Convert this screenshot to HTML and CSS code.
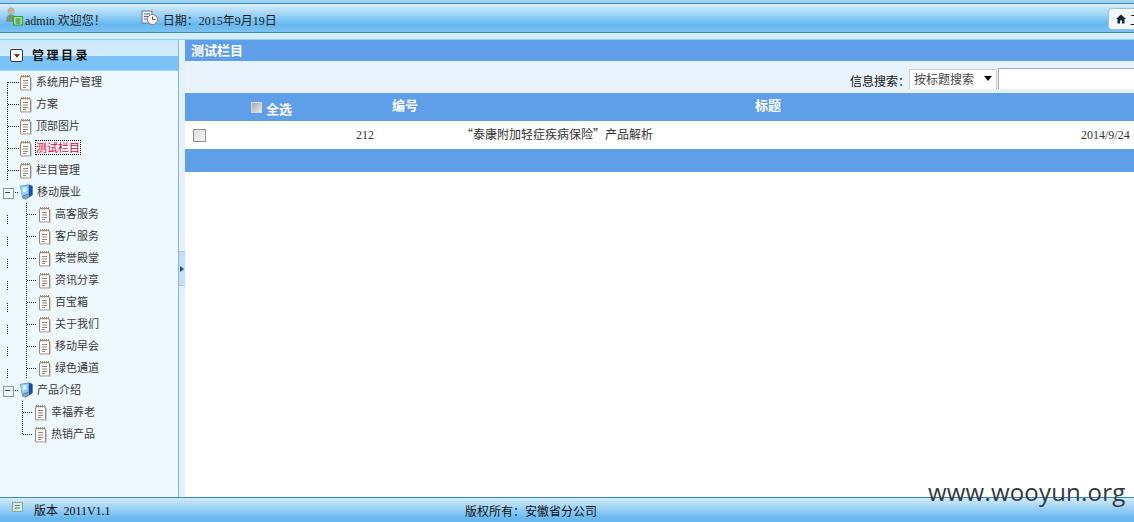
FILE: index.html
```html
<!DOCTYPE html>
<html lang="zh-CN">
<head>
<meta charset="utf-8">
<title>管理目录</title>
<link rel="stylesheet" href="styles.css">
</head>
<body>
<svg class="defs" width="0" height="0">
  <symbol id="note" viewBox="0 0 13 17">
    <rect x="1.500" y="2.500" width="10" height="13.500" rx="1" fill="#fbfaf4" stroke="#8f8a80"/>
    <path d="M12.500 4v12.500H4" fill="none" stroke="#d3cfc6"/>
    <path d="M2.500 1v2.500M4.500 1v2.500M6.500 1v2.500M8.500 1v2.500M10.500 1v2.500" stroke="#a98c62"/>
    <path d="M4 6.500h5M4 9h5M4 11.500h5M4 13.500h3" stroke="#8d8a84"/>
  </symbol>
  <symbol id="globe" viewBox="0 0 14 16">
    <path d="M1 2L10 .5 13.500 2v9L7 15.500 4 15 3 13z" fill="#3a7fdc"/>
    <path d="M1.500 2.500L9.500 1.200v8.300L3 12z" fill="#8fd0f5"/>
    <path d="M3.500 4l4-.7V7L4 8.500z" fill="#e9f8ff"/>
    <path d="M10 1l3.500 1.200V11L10 13z" fill="#1c4ea6"/>
    <path d="M3.500 12.500L10 10v2L6.500 15.500 3.500 14.500z" fill="#8f9cab"/>
  </symbol>
</svg>

<header class="top">
  <div class="top-bar">
    <div class="top-left">
      <svg class="user-icon" viewBox="0 0 17 19" width="17" height="19">
        <circle cx="5" cy="4" r="3.500" fill="#c2ae96"/>
        <path d="M3 4a2 2 0 0 0 4 0v2H3z" fill="#e8d6c2"/>
        <path d="M0 15c0-5 1.500-7.500 5-7.500S10 10 10 15z" fill="#6f9a86"/>
        <rect x="7.500" y="9.500" width="9" height="8.500" fill="#a6e88a" stroke="#3a9a42"/>
        <path d="M9.500 12h5M9.500 14h5M9.500 16h5" stroke="#1f7a38"/>
      </svg>
      <span class="welcome"><span class="latin">admin</span> 欢迎您！</span>
      <svg class="clock-icon" viewBox="0 0 17 15" width="17" height="15">
        <rect x="1" y="1" width="10" height="12" fill="#e8eef6" stroke="#6d7f96"/>
        <path d="M3 4h6M3 6.500h4M3 9h3" stroke="#5b6f8a"/>
        <circle cx="11.500" cy="9.500" r="5" fill="#fff" stroke="#8a7a6a"/>
        <path d="M11.500 6.500v3h3" stroke="#c0392b" fill="none"/>
      </svg>
      <span class="date">日期：<span class="latin">2015</span>年<span class="latin">9</span>月<span class="latin">19</span>日</span>
    </div>
    <div class="home-btn">
      <svg class="home-icon" viewBox="0 0 10 10" width="10" height="10"><path d="M5 .5L10 5H8.500v4.500H6V6.500H4v3H1.500V5H0z" fill="#10283c"/></svg>
      <span class="home-text">工作台</span>
    </div>
  </div>
  <div class="top-strip"></div>
</header>

<div class="middle">
  <aside class="side">
    <div class="side-head">
      <span class="toggle"></span>
      <span class="side-title">管理目录</span>
    </div>
    <nav class="tree">
      <div class="row"><span class="conn c0 first"></span><svg class="ic"><use href="#note"/></svg><span class="lab">系统用户管理</span></div>
      <div class="row"><span class="conn c0"></span><svg class="ic"><use href="#note"/></svg><span class="lab">方案</span></div>
      <div class="row"><span class="conn c0"></span><svg class="ic"><use href="#note"/></svg><span class="lab">顶部图片</span></div>
      <div class="row"><span class="conn c0"></span><svg class="ic"><use href="#note"/></svg><span class="lab cur">测试栏目</span></div>
      <div class="row"><span class="conn c0"></span><svg class="ic"><use href="#note"/></svg><span class="lab">栏目管理</span></div>

      <div class="row"><span class="plus"></span><svg class="gl"><use href="#globe"/></svg><span class="lab">移动展业</span></div>
      <div class="row"><span class="guide"></span><span class="conn c1"></span><svg class="ic"><use href="#note"/></svg><span class="lab">高客服务</span></div>
      <div class="row"><span class="guide"></span><span class="conn c1"></span><svg class="ic"><use href="#note"/></svg><span class="lab">客户服务</span></div>
      <div class="row"><span class="guide"></span><span class="conn c1"></span><svg class="ic"><use href="#note"/></svg><span class="lab">荣誉殿堂</span></div>
      <div class="row"><span class="guide"></span><span class="conn c1"></span><svg class="ic"><use href="#note"/></svg><span class="lab">资讯分享</span></div>
      <div class="row"><span class="guide"></span><span class="conn c1"></span><svg class="ic"><use href="#note"/></svg><span class="lab">百宝箱</span></div>
      <div class="row"><span class="guide"></span><span class="conn c1"></span><svg class="ic"><use href="#note"/></svg><span class="lab">关于我们</span></div>
      <div class="row"><span class="guide"></span><span class="conn c1"></span><svg class="ic"><use href="#note"/></svg><span class="lab">移动早会</span></div>
      <div class="row"><span class="guide"></span><span class="conn c1"></span><svg class="ic"><use href="#note"/></svg><span class="lab">绿色通道</span></div>

      <div class="row"><span class="plus"></span><svg class="gl"><use href="#globe"/></svg><span class="lab">产品介绍</span></div>
      <div class="row"><span class="conn c2"></span><svg class="ic"><use href="#note"/></svg><span class="lab">幸福养老</span></div>
      <div class="row"><span class="conn c2 last"></span><svg class="ic"><use href="#note"/></svg><span class="lab">热销产品</span></div>
    </nav>
  </aside>

  <div class="split"><span class="split-btn"></span></div>

  <main class="content">
    <h1 class="title">测试栏目</h1>
    <div class="search">
      <span class="search-label">信息搜索：</span>
      <div class="select"><span class="select-text">按标题搜索</span><i class="caret"></i></div>
      <div class="input"></div>
    </div>
    <div class="grid head">
      <div class="h-check"><span class="box small"></span><span class="all">全选</span></div>
      <div class="h-id">编号</div>
      <div class="h-title">标题</div>
      <div></div>
    </div>
    <div class="grid item">
      <div class="i-check"><span class="box"></span></div>
      <div class="latin">212</div>
      <div class="i-title">“泰康附加轻症疾病保险”产品解析</div>
      <div class="latin">2014/9/24</div>
    </div>
    <div class="pager"></div>
  </main>
</div>

<footer class="foot">
  <svg class="foot-icon" viewBox="0 0 11 10" width="11" height="10"><rect x=".5" y=".5" width="10" height="9" fill="#d6ecd8" stroke="#8aa4a8"/><path d="M3 3.500h5M3 6h5" stroke="#5f8a80"/></svg>
  <span class="ver">版本&nbsp; <span class="latin">2011V1.1</span></span>
  <span class="copy">版权所有：安徽省分公司</span>
</footer>

<div class="mark">www.wooyun.org</div>
</body>
</html>
```
FILE: styles.css
```css
* { box-sizing: border-box; }
html, body { margin: 0; height: 100%; overflow: hidden; }
body {
  display: flex;
  flex-direction: column;
  position: relative;
  background: #fff;
  font-family: "Noto Sans CJK SC", "Liberation Sans", sans-serif;
  font-size: 12px;
  color: #222;
}
.defs { position: absolute; }
.latin { font-family: "Liberation Serif", serif; }

/* top */
.top { flex: none; height: 40px; display: flex; flex-direction: column; }
.top-bar {
  height: 33px;
  padding-top: 4px;
  border-top: 1px solid #9fd3ee;
  border-bottom: 1px solid #3d87b8;
  box-shadow: inset 0 2px 0 #9fd3ee, inset 0 3px 0 #3d87b8;
  background: linear-gradient(#d9f0fc 3px, #d9f0fc 8%, #66b9ef 75%, #7cc2f0);
  display: flex;
  justify-content: space-between;
  overflow: hidden;
}
.top-left { display: flex; align-items: flex-start; }
.user-icon { margin: 2px 0 0 6px; flex: none; }
.welcome { font-size: 12px; line-height: 18px; margin: 6px 0 0 2px; white-space: nowrap; }
.welcome .latin { font-size: 12px; }
.clock-icon { margin: 5px 0 0 35px; flex: none; }
.date { font-size: 12px; line-height: 18px; margin: 6px 0 0 5px; white-space: nowrap; }
.date .latin { font-size: 12px; }
.home-btn {
  width: 26px;
  height: 22px;
  margin-top: 3px;
  padding-left: 7px;
  background: #f2f9fe;
  border: 1px solid #9dc4de;
  border-right: 0;
  border-radius: 4px 0 0 4px;
  display: flex;
  align-items: center;
  gap: 4px;
  overflow: hidden;
  white-space: nowrap;
  flex: none;
}
.home-icon { flex: none; }
.home-text { font-size: 12px; }
.top-strip { flex: 1; background: #d2eefc; border-bottom: 1px solid #8ed0ee; }

/* middle */
.middle { flex: 1; min-height: 0; display: flex; }
.side {
  flex: none;
  width: 179px;
  background: #eef8ff;
  border-right: 1px solid #86b6d6;
  display: flex;
  flex-direction: column;
}
.side-head {
  height: 31px;
  flex: none;
  background: linear-gradient(#c9e8fb 0, #d6eefc 16px, #79c3f6 16px, #79c3f6 30px, #9ed6f4 30px);
  display: flex;
  align-items: center;
  padding-left: 10px;
}
.toggle {
  width: 13px;
  height: 13px;
  border: 1px solid #333;
  border-radius: 2px;
  background: #fff;
  display: flex;
  align-items: center;
  justify-content: center;
}
.toggle::before {
  content: "";
  border: 3px solid transparent;
  border-top: 4px solid #6b3a1e;
  border-bottom: 0;
}
.side-title { margin: 0 0 2px 9px; font-weight: 700; font-size: 12px; letter-spacing: 2.500px; color: #111; }

.row { height: 22px; display: flex; align-items: center; }
.lab { font-size: 11px; line-height: 13px; color: #3a3a3a; margin: -2px 0 0 4px; white-space: nowrap; }
.ic { width: 13px; height: 17px; flex: none; }
.gl { width: 14px; height: 16px; flex: none; margin-left: 1px; }
.cur { color: #e3002b; outline: 1px dotted #000; outline-offset: 0; }

.conn {
  align-self: stretch;
  flex: none;
  width: 19px;
  background-image:
    repeating-linear-gradient(to bottom, #222 0 1px, transparent 1px 2px),
    repeating-linear-gradient(to right, #222 0 1px, transparent 1px 2px);
  background-repeat: no-repeat;
  background-size: 1px 100%, 11px 1px;
  background-position: 7px 0, 8px 11px;
}
.c0.first { background-size: 1px 50%, 11px 1px; background-position: 7px 100%, 8px 11px; }
.c1 { width: 11px; margin-right: 1px; background-position: 0 0, 1px 11px; background-size: 1px 100%, 10px 1px; }
.c2 { width: 34px; background-position: 22px 0, 23px 11px; background-size: 1px 100%, 10px 1px; }
.c2.last { background-size: 1px 12px, 10px 1px; }
.guide {
  flex: none;
  align-self: stretch;
  width: 26px;
  background-image: repeating-linear-gradient(to bottom, #222 0 1px, transparent 1px 2px);
  background-repeat: no-repeat;
  background-size: 1px 9px;
  background-position: 7px 12px;
}
.plus {
  flex: none;
  width: 15px;
  height: 9px;
  margin-left: 3px;
  background-image:
    linear-gradient(#444, #444),
    repeating-linear-gradient(to right, #222 0 1px, transparent 1px 2px);
  background-repeat: no-repeat;
  background-size: 5px 1px, 5px 1px;
  background-position: 2px 4px, 10px 4px;
}
.plus::before {
  content: "";
  display: block;
  width: 9px;
  height: 9px;
  border: 1px solid #8a98a6;
}

.split {
  flex: none;
  width: 6px;
  background: #e3f1fb;
  display: flex;
  align-items: center;
}
.split-btn {
  width: 6px;
  height: 35px;
  background: #bfe0f8;
  border-top: 1px solid #a8cfea;
  border-bottom: 1px solid #a8cfea;
  display: flex;
  align-items: center;
  padding-left: 1px;
}
.split-btn::before {
  content: "";
  border: 3.500px solid transparent;
  border-left: 4px solid #1c4f86;
  border-right: 0;
}

/* content */
.content { flex: 1; min-width: 0; background: #fff; }
.title {
  margin: 0;
  height: 21px;
  padding-left: 6px;
  background: #5f9ee8;
  color: #fff;
  font-size: 13px;
  font-weight: 700;
  line-height: 20px;
}
.search {
  height: 32px;
  background: #e8f2fc;
  display: flex;
  justify-content: flex-end;
  align-items: flex-start;
  padding-top: 7px;
  overflow: hidden;
}
.search-label { font-size: 12px; line-height: 20px; margin: 3px 0 0 0; width: 59px; color: #111; white-space: nowrap; flex: none; }
.select {
  width: 88px;
  height: 20px;
  margin-top: 1px;
  background: #fff;
  border: 1px solid #c8d0d8;
  border-bottom: 0;
  padding: 0 4px 2px 4px;
  font-size: 12px;
  line-height: 17px;
  color: #444;
  display: flex;
  justify-content: space-between;
  align-items: center;
  flex: none;
}
.caret { border: 4px solid transparent; border-top: 5px solid #111; border-bottom: 0; }
.input {
  width: 136px;
  height: 21px;
  margin-left: 1px;
  background: #fff;
  border: 1px solid #a8aebc;
  border-right: 0;
  border-bottom: 0;
  flex: none;
}

.grid { display: grid; grid-template-columns: 171px 105px 1fr 53px; }
.head {
  height: 28px;
  background: #5f9ee8;
  color: #fff;
  font-weight: 700;
  font-size: 13px;
}
.h-check { padding: 4px 0 0 66px; display: flex; align-items: center; gap: 4px; height: 28px; }
.all { line-height: 18px; }
.h-id { padding: 3px 0 0 36px; line-height: 18px; }
.h-title { padding: 3px 0 0 294px; line-height: 18px; }
.item { height: 28px; align-items: center; color: #333; }
.i-check { padding-left: 8px; display: flex; }
.item .latin { font-size: 12px; }
.i-title { font-size: 12px; padding-bottom: 4px; }
.box {
  display: block;
  width: 13px;
  height: 13px;
  background: linear-gradient(135deg, #dcdcdc, #f6f6f6);
  border: 1px solid #8f8f8f;
}
.box.small { width: 11px; height: 11px; margin-top: -3px; border-color: #d8d8d8; background: linear-gradient(135deg, #a9a9a9, #e8e8e8); }
.pager { height: 23px; background: #5f9ee8; }

/* footer */
.foot {
  flex: none;
  height: 25px;
  border-top: 1px solid #3d87b8;
  background: linear-gradient(#d2ebfb, #69b9ef 85%);
  display: flex;
  align-items: center;
  font-size: 12px;
  color: #111;
  white-space: nowrap;
}
.foot-icon { margin: -6px 0 0 12px; }
.ver { margin-left: 11px; width: 431px; flex: none; }
.copy { font-size: 12px; }

.mark {
  position: absolute;
  left: 928px;
  top: 476px;
  font-family: "Open Sans", sans-serif;
  font-size: 24px;
  letter-spacing: .2px;
  line-height: 32px;
  color: #333a40;
  white-space: nowrap;
}
```
